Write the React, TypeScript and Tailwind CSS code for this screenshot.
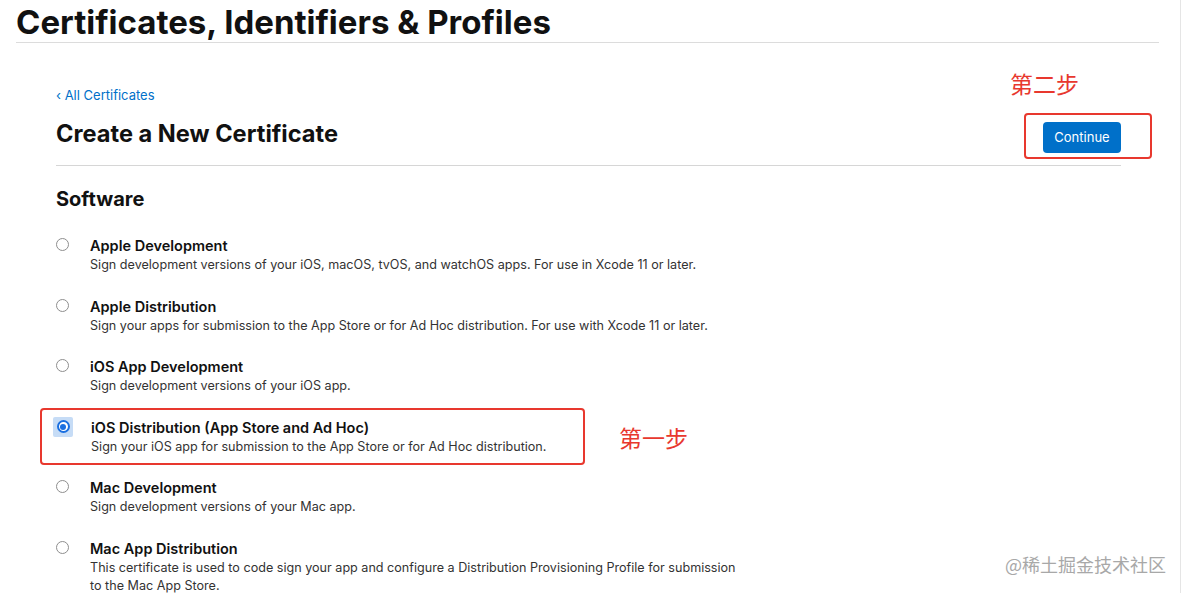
const certTypes = [
  {
    title: "Apple Development",
    desc: "Sign development versions of your iOS, macOS, tvOS, and watchOS apps. For use in Xcode 11 or later.",
  },
  {
    title: "Apple Distribution",
    desc: "Sign your apps for submission to the App Store or for Ad Hoc distribution. For use with Xcode 11 or later.",
  },
  {
    title: "iOS App Development",
    desc: "Sign development versions of your iOS app.",
  },
  {
    title: "iOS Distribution (App Store and Ad Hoc)",
    desc: "Sign your iOS app for submission to the App Store or for Ad Hoc distribution.",
    selected: true,
  },
  {
    title: "Mac Development",
    desc: "Sign development versions of your Mac app.",
  },
  {
    title: "Mac App Distribution",
    desc: "This certificate is used to code sign your app and configure a Distribution Provisioning Profile for submission to the Mac App Store.",
  },
];

function Radio({ checked }: { checked?: boolean }) {
  if (checked) {
    return (
      <span className="mt-[-1px] -ml-[3px] flex h-[20px] w-[20px] shrink-0 items-center justify-center rounded-[2px] bg-[#c6dcf6]">
        <span className="flex h-[13px] w-[13px] items-center justify-center rounded-full border-2 border-[#1a6fe0] bg-white">
          <span className="h-[6px] w-[6px] rounded-full bg-[#1a6fe0]" />
        </span>
      </span>
    );
  }
  return <span className="mt-[2px] h-[13px] w-[13px] shrink-0 rounded-full border border-[#8e8e8e] bg-white" />;
}

export default function App() {
  return (
    <div className="relative h-[593px] w-[1184px] overflow-hidden bg-white font-['Inter',sans-serif] text-[#1d1d1f]">
      <div className="h-[593px] w-[1181px] border-r border-[#e5e5e5]">
        <header className="ml-4 mr-[21px] h-[43px] border-b border-[#dcdcdc]">
          <h1 className="pt-[3px] text-[33px] font-bold leading-[38px] text-[#111]">
            Certificates, Identifiers &amp; Profiles
          </h1>
        </header>

        <main className="ml-14 w-[1065px]">
          <a className="mt-[44px] block text-[13px] leading-[16px] text-[#0070c9]">‹ All Certificates</a>

          <div className="mt-[16px] flex items-start justify-between border-b border-[#d6d6d6] pb-[12px]">
            <h2 className="text-[23.6px] font-bold leading-[29px] text-[#111]">Create a New Certificate</h2>
            <div className="relative">
              <button className="mt-[3px] h-[31px] w-[78px] rounded-[4px] bg-[#0070c9] text-[13px] text-white">
                Continue
              </button>
              <div className="pointer-events-none absolute -left-[19px] -top-[6px] h-[46px] w-[128px] rounded-[4px] border-2 border-[#e8382e]" />
              <div className="absolute -left-[33px] -top-[49px] whitespace-nowrap font-['Noto_Sans_CJK_SC',sans-serif] text-[23px] leading-[26px] text-[#e8382e]">
                第二步
              </div>
            </div>
          </div>

          <h3 className="mt-[21px] text-[20px] font-bold leading-[24px] text-[#111]">Software</h3>

          <ul className="mt-[25px] flex flex-col gap-[22.6px]">
            {certTypes.map((c) => (
              <li key={c.title} className="relative flex gap-[21px]">
                <Radio checked={c.selected} />
                <div className={c.selected ? "ml-[-3px] w-[655px]" : "w-[655px]"}>
                  <div className="text-[14.5px] font-semibold leading-[20px] text-[#111]">{c.title}</div>
                  <div className="text-[12.6px] leading-[18px] text-[#333]">{c.desc}</div>
                </div>
                {c.selected && (
                  <>
                    <div className="pointer-events-none absolute -left-[16px] -top-[10px] h-[57px] w-[545px] rounded-[4px] border-2 border-[#e8382e]" />
                    <div className="absolute left-[563px] top-[6px] whitespace-nowrap font-['Noto_Sans_CJK_SC',sans-serif] text-[23px] leading-[26px] text-[#e8382e]">
                      第一步
                    </div>
                  </>
                )}
              </li>
            ))}
          </ul>
        </main>
      </div>

      <div className="absolute left-[1005px] top-[553px] whitespace-nowrap font-['Noto_Sans_CJK_SC',sans-serif] text-[18px] leading-[22px] text-[#a8a8a8]">
        @稀土掘金技术社区
      </div>
    </div>
  );
}
